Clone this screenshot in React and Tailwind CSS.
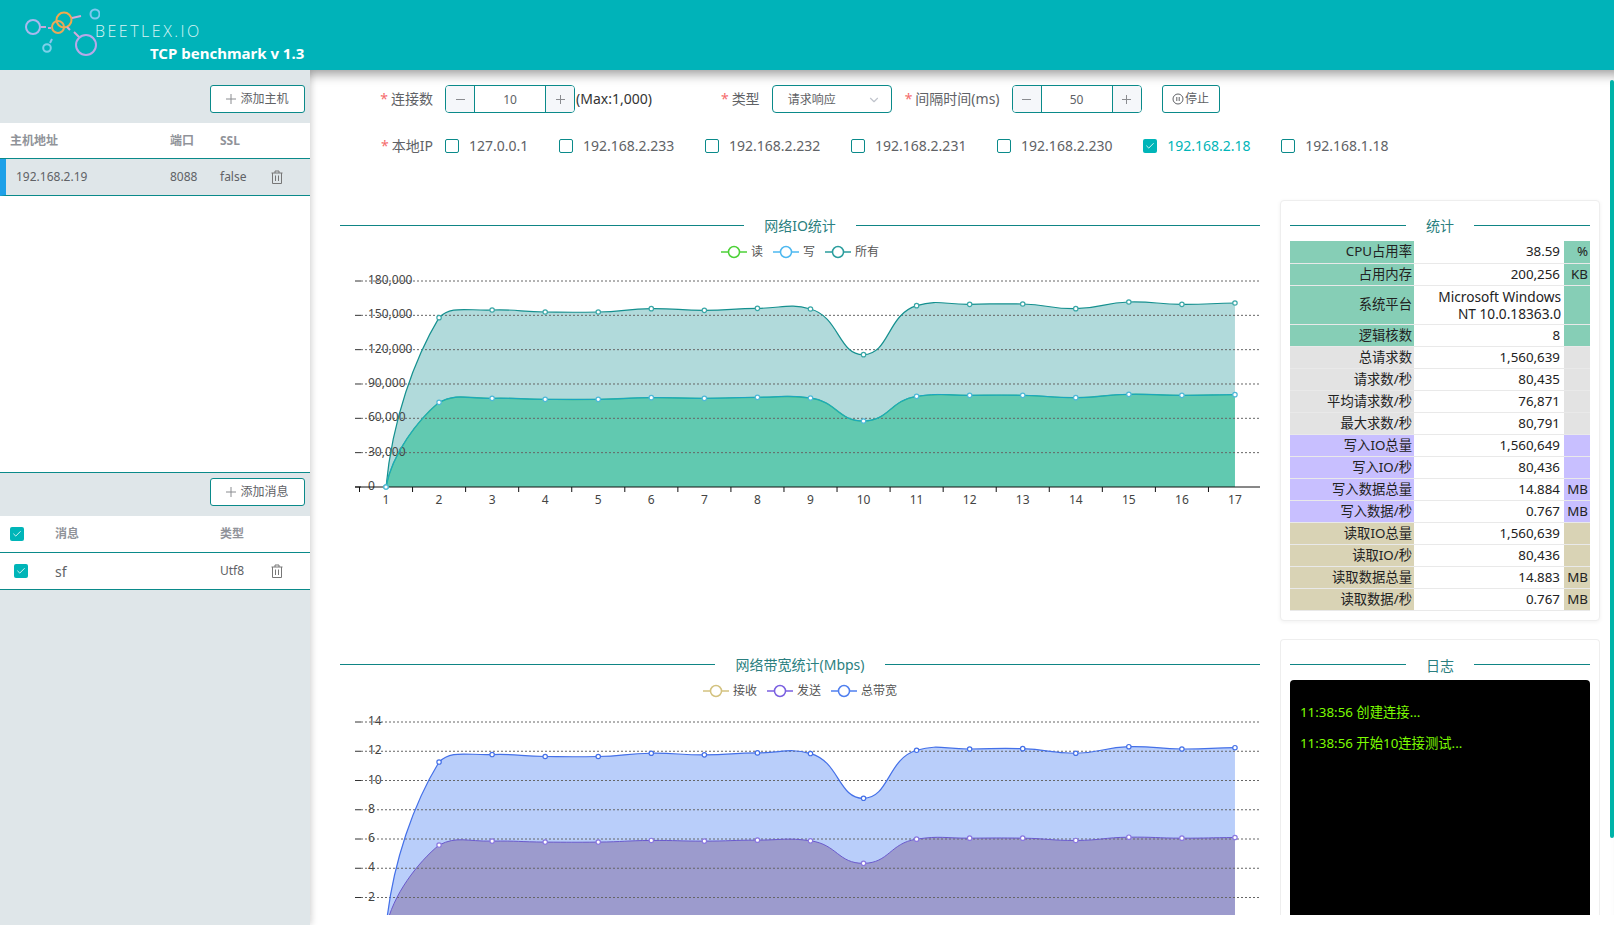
import { ChevronDown, Check } from "lucide-react";

const ZOOM_ALL = [831, 323, 300, 306, 306, 296, 301, 295, 297, 434, 287, 283, 282, 296, 276, 283, 279];
const ZOOM_LOW = [831, 577, 565, 568, 568, 563, 565, 562, 564, 633, 559, 556, 556, 563, 553, 556, 554];
const AXIS_Y = 228;
const TOP_Y = 22;
const SMOOTH_X = 0.48;
const SMOOTH_Y = 0.3;
const IPS = ["127.0.0.1", "192.168.2.233", "192.168.2.232", "192.168.2.231", "192.168.2.230", "192.168.2.18", "192.168.1.18"];

const STATS = [
  ["CPU占用率", "38.59", "%", "bg-[#86ceb6]"],
  ["占用内存", "200,256", "KB", "bg-[#86ceb6]"],
  ["系统平台", "win", "", "bg-[#86ceb6]"],
  ["逻辑核数", "8", "", "bg-[#86ceb6]"],
  ["总请求数", "1,560,639", "", "bg-[#e3e3e3]"],
  ["请求数/秒", "80,435", "", "bg-[#e3e3e3]"],
  ["平均请求数/秒", "76,871", "", "bg-[#e3e3e3]"],
  ["最大求数/秒", "80,791", "", "bg-[#e3e3e3]"],
  ["写入IO总量", "1,560,649", "", "bg-[#c8bfff]"],
  ["写入IO/秒", "80,436", "", "bg-[#c8bfff]"],
  ["写入数据总量", "14.884", "MB", "bg-[#c8bfff]"],
  ["写入数据/秒", "0.767", "MB", "bg-[#c8bfff]"],
  ["读取IO总量", "1,560,639", "", "bg-[#d9d3b5]"],
  ["读取IO/秒", "80,436", "", "bg-[#d9d3b5]"],
  ["读取数据总量", "14.883", "MB", "bg-[#d9d3b5]"],
  ["读取数据/秒", "0.767", "MB", "bg-[#d9d3b5]"],
];

// smooth line through the points, first segment leaves steeply like the chart does
function smoothPath(pts) {
  let d = `M${pts[0][0]} ${pts[0][1]}`;
  const cps = pts.map((p, i) => {
    const prev = pts[Math.max(i - 1, 0)];
    const next = pts[Math.min(i + 1, pts.length - 1)];
    const vx = next[0] - prev[0];
    const vy = next[1] - prev[1];
    const a = Math.hypot(p[0] - prev[0], p[1] - prev[1]);
    const b = Math.hypot(next[0] - p[0], next[1] - p[1]);
    const r = a + b ? b / (a + b) : 0;
    const inX = i === 1 ? 0.3 : SMOOTH_X;
    return {
      out: i === 0 ? [p[0] + vx * 0.12, p[1] + vy * 0.4] : [p[0] + vx * SMOOTH_X * r, p[1] + vy * SMOOTH_Y * r],
      in: [p[0] - vx * inX * (1 - r), p[1] - vy * SMOOTH_Y * (1 - r)],
    };
  });
  for (let i = 1; i < pts.length; i++) {
    d += `C${cps[i - 1].out[0]} ${cps[i - 1].out[1]} ${cps[i].in[0]} ${cps[i].in[1]} ${pts[i][0]} ${pts[i][1]}`;
  }
  return d;
}

function Divider({ title }) {
  return (
    <div className="flex items-center h-5">
      <div className="flex-1 h-px bg-[#0f8585]"></div>
      <div className="text-sm text-[#2b7f80] px-5 pt-[2px]">{title}</div>
      <div className="flex-1 h-px bg-[#0f8585]"></div>
    </div>
  );
}

function Legend({ items }) {
  return (
    <div className="flex justify-center items-center h-4 mt-[9px] -mb-[1px] gap-[10px] text-xs text-[#555]">
      {items.map(([name, color]) => (
        <div key={name} className="flex items-center gap-[4px]">
          <svg width="26" height="14">
            <line x1="0" y1="7" x2="26" y2="7" stroke={color} strokeWidth="1.5" />
            <circle cx="13" cy="7" r="5.5" fill="#fff" stroke={color} strokeWidth="1.5" />
          </svg>
          <span>{name}</span>
        </div>
      ))}
    </div>
  );
}

function Chart({ labels, step, scale, upper, lower, lowerTop, height, showAxis, className = "" }) {
  const xAt = (i) => 46 + 53.06 * i;
  const pick = (arr) => arr.map((v, i) => [xAt(i), AXIS_Y - ((831 - v) / 3) * scale]);
  const top = pick(ZOOM_ALL);
  const low = pick(ZOOM_LOW);
  const topLine = smoothPath(top);
  const lowLine = smoothPath(low);
  const close = `L${xAt(16)} ${AXIS_Y}L${xAt(0)} ${AXIS_Y}Z`;
  return (
    <svg width="920" height={height} className={"block " + className}>
      <path d={topLine + close} fill={upper.fill} />
      <path d={lowLine + close} fill={lower.fill} />
      {labels.map((label, i) => {
        const y = TOP_Y + step * i;
        return (
          <g key={label}>
            <line x1="15" y1={y} x2="21" y2={y} stroke="#333" />
            {label !== "0" && <line x1="21" y1={y} x2="920" y2={y} stroke="#666" strokeDasharray="2 2" />}
            <text x="28" y={y + 3} fontSize="12" fill="#444">{label}</text>
          </g>
        );
      })}
      {showAxis && (
        <>
          <line x1="15" y1={AXIS_Y} x2="920" y2={AXIS_Y} stroke="#111" />
          {Array.from({ length: 18 }, (_, i) => (
            <line key={i} x1={19.5 + 53.06 * i} y1={AXIS_Y} x2={19.5 + 53.06 * i} y2={AXIS_Y + 5} stroke="#111" />
          ))}
          {top.map((_, i) => (
            <text key={i} x={xAt(i)} y={AXIS_Y + 17} fontSize="12" textAnchor="middle" fill="#444">{i + 1}</text>
          ))}
        </>
      )}
      <path d={topLine} fill="none" stroke={upper.line} strokeWidth="1.2" />
      {lowerTop && <path d={lowLine} fill="none" stroke={lowerTop} strokeWidth="1.4" />}
      <path d={lowLine} fill="none" stroke={lower.line} strokeWidth="1" />
      {top.map((p, i) => (
        <circle key={i} cx={p[0]} cy={p[1]} r="2.2" fill="#fff" stroke={upper.dot} strokeWidth="1.2" />
      ))}
      {low.map((p, i) => (
        <circle key={i} cx={p[0]} cy={p[1]} r="2.2" fill="#fff" stroke={lower.dot} strokeWidth="1.2" />
      ))}
    </svg>
  );
}

function Logo() {
  return (
    <svg width="100" height="70" className="shrink-0">
      <g fill="none" strokeWidth="2">
        <circle cx="33" cy="27" r="7" stroke="#a9b8ee" />
        <circle cx="64" cy="20" r="7.5" stroke="#f2a94c" />
        <circle cx="58" cy="27" r="6" stroke="#e9a95a" />
        <circle cx="95" cy="14" r="4.5" stroke="#7dc8f0" />
        <circle cx="86" cy="45" r="10" stroke="#b8a8e8" />
        <circle cx="47" cy="48" r="3.8" stroke="#7dd0ea" />
        <path d="M41 27h5" stroke="#c9a6d8" />
        <path d="M48 28h3" stroke="#c9a6d8" />
        <path d="M72 18l9-2" stroke="#d8a8d8" />
        <path d="M67 27l3 3" stroke="#d8a8d8" />
        <path d="M74 32l5 5" stroke="#d8a8d8" />
        <path d="M50 43l2-4" stroke="#8fc4ee" />
      </g>
    </svg>
  );
}

function TrashIcon() {
  return (
    <svg width="12" height="14" viewBox="0 0 12 14" fill="none" stroke="#777" strokeWidth="1">
      <path d="M0.5 3h11M4 3V1h4v2M1.5 3v10.5h9V3M4.5 5.5v5.5M7.5 5.5v5.5" />
    </svg>
  );
}

function CheckBox({ checked, className = "" }) {
  if (checked) {
    return (
      <span className={"w-[14px] h-[14px] rounded-[2px] bg-[#00b5b8] flex items-center justify-center shrink-0 " + className}>
        <Check size={10} color="#fff" strokeWidth={2} />
      </span>
    );
  }
  return <span className={"w-[14px] h-[14px] rounded-[2px] border border-[#0a8a8a] bg-white shrink-0 " + className}></span>;
}

function AddButton({ text }) {
  return (
    <button className="w-[95px] h-[28px] rounded-[3px] border border-[#0a8a8a] bg-white text-xs text-[#606266] flex items-center justify-center gap-[4px]">
      <svg width="10" height="10" stroke="#8a8c90"><path d="M5 0v10M0 5h10" /></svg>
      {text}
    </button>
  );
}

function NumberBox({ value }) {
  return (
    <div className="w-[130px] h-[28px] rounded-[4px] border border-[#0a8a8a] flex items-center text-xs text-[#606266] overflow-hidden shrink-0">
      <div className="w-[29px] h-full bg-[#f5f7fa] border-r border-[#0a8a8a] flex items-center justify-center">
        <svg width="9" height="9" stroke="#8a8c90"><path d="M0 4.5h9" /></svg>
      </div>
      <div className="flex-1 text-center pt-[1px]">{value}</div>
      <div className="w-[29px] h-full bg-[#f5f7fa] border-l border-[#0a8a8a] flex items-center justify-center">
        <svg width="9" height="9" stroke="#8a8c90"><path d="M4.5 0v9M0 4.5h9" /></svg>
      </div>
    </div>
  );
}

function Label({ text, className = "" }) {
  return (
    <label className={"text-sm text-[#606266] shrink-0 " + className}>
      <span className="text-[#f56c6c] mr-[3px]">*</span>{text}
    </label>
  );
}

function Sidebar() {
  return (
    <aside className="w-[310px] shrink-0 h-[855px] flex flex-col bg-white relative z-10 shadow-[2px_0_6px_rgba(0,0,0,0.15)] text-xs">
      <div className="h-[53px] bg-[#dfe6e9] flex justify-end pt-[15px] pr-[5px]">
        <AddButton text="添加主机" />
      </div>
      <div className="h-[36px] flex items-center border-b border-[#0a8a8a] font-bold text-[#909399]">
        <div className="w-[170px] pl-[10px]">主机地址</div>
        <div className="w-[50px]">端口</div>
        <div>SSL</div>
      </div>
      <div className="h-[37px] flex items-center bg-[#dfe6e9] border-b border-[#0a8a8a] border-l-[6px] border-l-[#1ea0e8] text-[#606266]">
        <div className="w-[164px] pl-[10px]">192.168.2.19</div>
        <div className="w-[50px]">8088</div>
        <div className="w-[51px]">false</div>
        <TrashIcon />
      </div>
      <div className="h-[277px] border-b border-[#0a8a8a]"></div>
      <div className="h-[43px] bg-[#dfe6e9] flex justify-end pt-[5px] pr-[5px]">
        <AddButton text="添加消息" />
      </div>
      <div className="h-[37px] flex items-center border-b border-[#0a8a8a] font-bold text-[#909399]">
        <div className="w-[55px] pl-[10px]"><CheckBox checked /></div>
        <div className="w-[165px]">消息</div>
        <div>类型</div>
      </div>
      <div className="h-[37px] flex items-center border-b border-[#0a8a8a] text-[#606266]">
        <div className="w-[55px] pl-[14px]"><CheckBox checked /></div>
        <div className="w-[165px] text-sm pt-[1px]">sf</div>
        <div className="w-[51px]">Utf8</div>
        <TrashIcon />
      </div>
      <div className="flex-1 bg-[#dfe6e9]"></div>
    </aside>
  );
}

function FormArea() {
  return (
    <div className="pt-[15px]">
      <div className="flex items-center h-[28px]">
        <Label text="连接数" className="w-[135px] pr-[12px] text-right" />
        <NumberBox value="10" />
        <span className="ml-[1px] text-sm text-[#333]">(Max:1,000)</span>
        <Label text="类型" className="ml-[69px] mr-[12px]" />
        <div className="w-[120px] h-[28px] rounded-[4px] border border-[#0a8a8a] flex items-center justify-between pl-[15px] pr-[10px] pt-[1px] text-xs text-[#606266]">
          请求响应
          <ChevronDown size={14} color="#c0c4cc" />
        </div>
        <Label text="间隔时间(ms)" className="ml-[13px] mr-[12px]" />
        <NumberBox value="50" />
        <button className="ml-[20px] w-[58px] h-[28px] -mt-[1px] rounded-[3px] border border-[#0a8a8a] bg-white text-xs text-[#606266] flex items-center justify-center">
          <svg width="12" height="12" viewBox="0 0 12 12" fill="none" stroke="#606266" className="mr-[1px]">
            <circle cx="6" cy="6" r="5" />
            <path d="M4.8 4v4M7.2 4v4" />
          </svg>
          停止
        </button>
      </div>
      <div className="flex items-center h-[28px] mt-[19px]">
        <Label text="本地IP" className="w-[135px] pr-[12px] text-right" />
        <div className="flex items-center gap-[30.7px] text-sm text-[#606266]">
          {IPS.map((ip) => (
            <div key={ip} className={"flex items-center gap-[10px] " + (ip === "192.168.2.18" ? "text-[#00b5b8]" : "")}>
              <CheckBox checked={ip === "192.168.2.18"} />
              {ip}
            </div>
          ))}
        </div>
      </div>
    </div>
  );
}

function StatsCard() {
  return (
    <div className="bg-white border border-[#eeeeee] rounded-[4px] shadow-[0_1px_4px_rgba(0,0,0,0.06)] px-[9px] pt-[14px] pb-[9px]">
      <Divider title="统计" />
      <table className="w-full mt-[6px] table-fixed border-collapse text-[13.33px] text-[#222]">
        <tbody>
          {STATS.map(([name, value, unit, bg]) => (
            <tr key={name} className="border-b border-[#e9e9e9]">
              <td className={"w-[124px] h-[22px] p-0 pr-[2px] text-right leading-[21px] " + bg}>{name}</td>
              <td className="p-0 pr-[4px] text-right leading-[21px]">
                {value === "win" ? (
                  <div className="py-[2px] pr-0 -mr-[1px] text-[13.7px] leading-[17px] whitespace-nowrap">Microsoft Windows<br />NT 10.0.18363.0</div>
                ) : value}
              </td>
              <td className={"w-[26px] p-0 pr-[2px] text-right leading-[21px] whitespace-nowrap " + bg}>{unit}</td>
            </tr>
          ))}
        </tbody>
      </table>
    </div>
  );
}

function LogCard() {
  return (
    <div className="mt-[18px] bg-white border border-b-0 border-[#eeeeee] rounded-t-[4px] px-[9px] pt-[15px]">
      <Divider title="日志" />
      <div className="mt-[5px] h-[237px] bg-black rounded-t-[4px] px-[10px] pt-[22px] text-[13.33px] text-[#7cfc00]">
        <p className="leading-[21px] mb-[10px]">11:38:56 创建连接...</p>
        <p className="leading-[21px]">11:38:56 开始10连接测试...</p>
      </div>
    </div>
  );
}

export default function App() {
  return (
    <div className="w-[1614px] h-[925px] overflow-hidden bg-white font-['Noto_Sans','Noto_Sans_CJK_SC',sans-serif]">
      <header className="h-[70px] bg-[#00b3b9] flex relative z-20">
        <Logo />
        <div className="pt-[21px] -ml-[5px]">
          <div className="font-['Open_Sans',sans-serif] font-light text-[16px] leading-[20px] tracking-[2.5px] text-[#d8f4f5]">BEETLEX.IO</div>
          <div className="ml-[55px] mt-[2px] text-[15px] leading-[20px] font-bold text-white whitespace-nowrap">TCP benchmark v 1.3</div>
        </div>
      </header>
      <div className="flex">
        <Sidebar />
        <main className="flex-1 h-[845px] overflow-hidden shadow-[inset_0_14px_12px_-10px_rgba(0,0,0,0.4)]">
          <div className="flex">
            <div className="flex-1">
              <FormArea />
              <div className="flex mt-[40px]">
                <div className="w-[920px] ml-[30px] pt-[15px]">
                  <Divider title="网络IO统计" />
                  <Legend items={[["读", "#4cd137"], ["写", "#4db8f0"], ["所有", "#2a9d9d"]]} />
                  <Chart
                    labels={["180,000", "150,000", "120,000", "90,000", "60,000", "30,000", "0"]}
                    step={34.33}
                    scale={1}
                    height={395}
                    showAxis
                    upper={{ fill: "#b1dadb", line: "#15908f", dot: "#3aa7a7" }}
                    lower={{ fill: "#61c9b0", line: "#1aa6c4", dot: "#4db8d8" }}
                    lowerTop="#2fb98f"
                  />
                  <Divider title="网络带宽统计(Mbps)" />
                  <Legend items={[["接收", "#d3c27f"], ["发送", "#7a5fe0"], ["总带宽", "#4f7fef"]]} />
                  <Chart
                    labels={["14", "12", "10", "8", "6", "4", "2"]}
                    step={29.25}
                    scale={0.98}
                    height={215}
                    className="mt-[2px]"
                    upper={{ fill: "#b9cefa", line: "#4470e8", dot: "#4470e8" }}
                    lower={{ fill: "#9c9bcd", line: "#6a5acd", dot: "#8a78e0" }}
                  />
                </div>
                <div className="w-[320px] ml-[20px]">
                  <StatsCard />
                  <LogCard />
                </div>
              </div>
            </div>
            <div className="w-[4px] h-[758px] mt-[10px] rounded-[2px] bg-[#00b3a8] shrink-0"></div>
          </div>
        </main>
      </div>
    </div>
  );
}
